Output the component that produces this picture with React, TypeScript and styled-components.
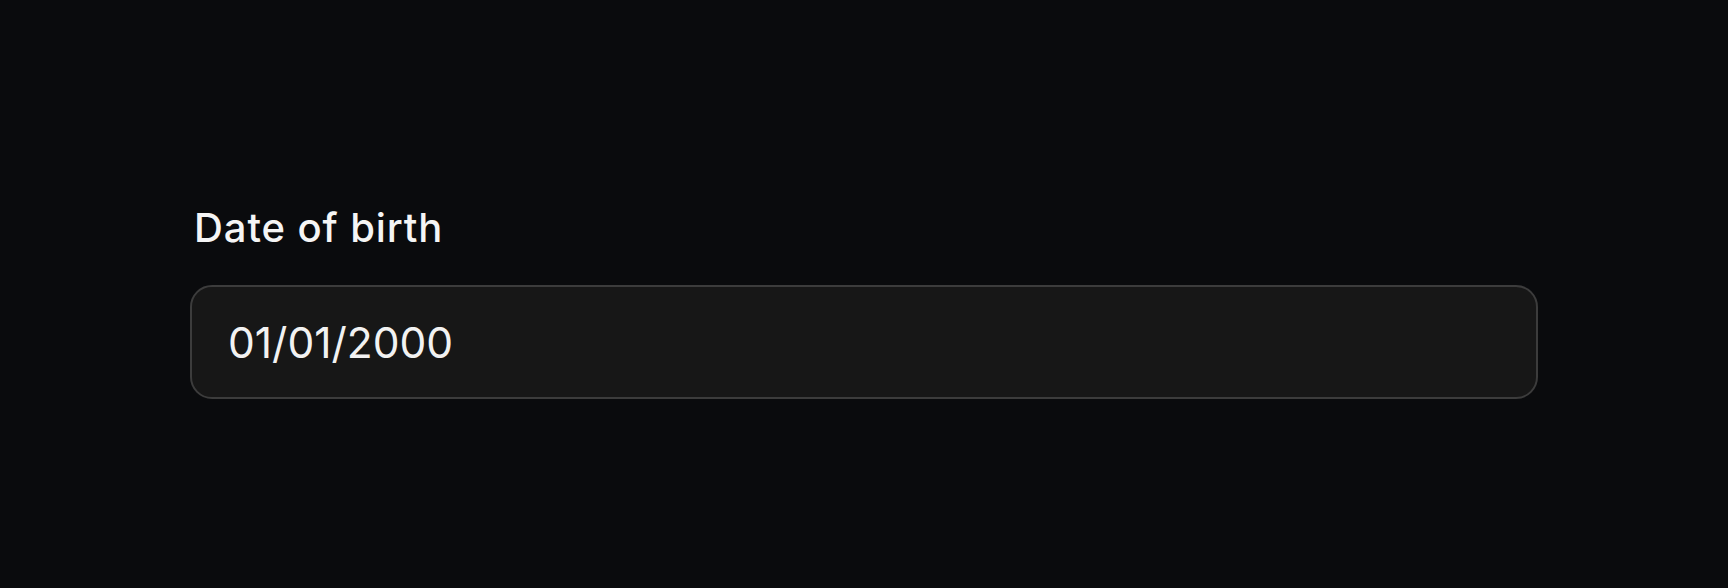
import React, { useState } from "react";
import styled, { createGlobalStyle } from "styled-components";

const GlobalStyle = createGlobalStyle`
  html, body {
    margin: 0;
    padding: 0;
    background: #0a0b0d;
    font-family: Inter, "Noto Sans", "Liberation Sans", sans-serif;
  }
`;

const Page = styled.div`
  min-height: 588px;
  padding: 203px 190px 0 190px;
  box-sizing: border-box;
`;

const Field = styled.div`
  display: flex;
  flex-direction: column;
  gap: 33px;
`;

const Label = styled.label`
  color: #f5f5f5;
  font-size: 40px;
  line-height: 49px;
  font-weight: 500;
  letter-spacing: 0.9px;
  padding-left: 4px;
`;

const Input = styled.input`
  width: 100%;
  height: 114px;
  box-sizing: border-box;
  background: #171717;
  border: 2px solid #3c3c3c;
  border-radius: 22px;
  padding: 0 36px;
  color: #f2f2f2;
  font-family: inherit;
  font-size: 42.5px;
  outline: none;
`;

const App = () => {
  const [value, setValue] = useState("01/01/2000");
  return (
    <>
      <GlobalStyle />
      <Page>
        <Field>
          <Label htmlFor="dob">Date of birth</Label>
          <Input id="dob" value={value} onChange={(e) => setValue(e.target.value)} />
        </Field>
      </Page>
    </>
  );
};

export default App;
